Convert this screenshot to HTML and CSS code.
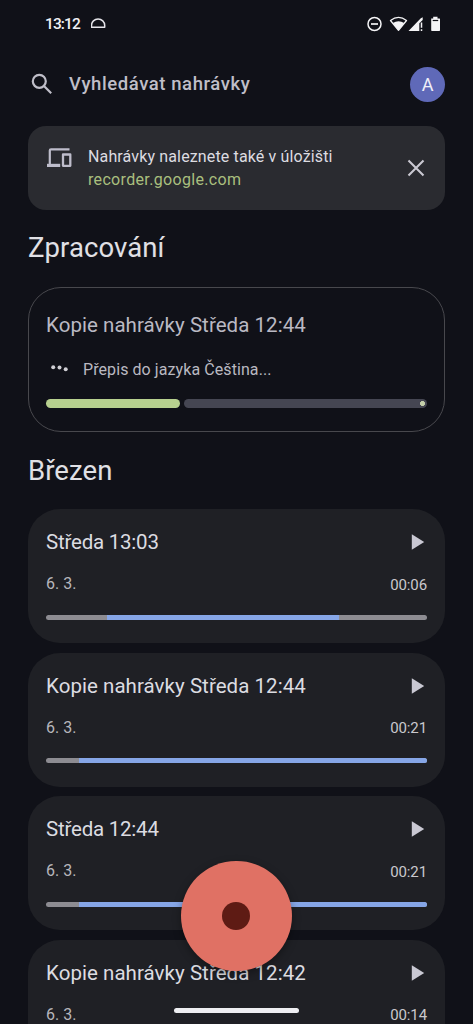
FILE: index.html
```html
<!DOCTYPE html>
<html lang="cs">
<head>
<meta charset="utf-8">
<title>Nahrávky</title>
<link rel="stylesheet" href="styles.css">
</head>
<body>
<div class="screen">
  <header class="status">
    <span class="clock">13:12</span>
    <svg class="dome" width="16" height="12" viewBox="0 0 16 12" fill="none" stroke="#e6e5ea" stroke-width="1.500" stroke-linejoin="round"><path d="M.5 9.300V7.500a6.600 6.500 0 0 1 13.200 0v1.800Z"/></svg>
    <svg class="system" width="75" height="18" viewBox="0 0 75 18">
      <circle cx="8.500" cy="9" r="6.500" fill="none" stroke="#f4f4f6" stroke-width="1.500"/>
      <path d="M5 9h7" stroke="#f4f4f6" stroke-width="1.700"/>
      <path d="M24.500 5.500Q32.500-.7 40.500 5.500L32.500 15.300Z" fill="none" stroke="#f4f4f6" stroke-width="1.300" stroke-linejoin="round"/>
      <path d="M26.800 8Q32.500 4.500 38.200 8L32.500 15.500Z" fill="#f4f4f6"/>
      <path d="M42.500 16 54.800 3.200 56.700 2.300V5L53.300 8.300V16Z" fill="#f4f4f6"/>
      <path d="M55.500 7.500v5.200M55.500 14.200v1.800" stroke="#f4f4f6" stroke-width="1.500"/>
      <path d="M65.200 3.500h2v-1.800h4.300v1.800h2q.5 0 .5.500v11.300q0 .7-.7.700h-7.400q-.7 0-.7-.7Z" fill="#f4f4f6"/>
      <path d="M66.700 5.500h5.500" stroke="#101118" stroke-width="1.200"/>
    </svg>
  </header>

  <div class="search">
    <svg class="lens" width="22" height="22" viewBox="0 0 22 22" fill="none" stroke="#bfbec8" stroke-width="2.200"><circle cx="8.300" cy="8.300" r="6.500"/><path d="m13 13 7.200 7.200"/></svg>
    <span class="placeholder">Vyhledávat nahrávky</span>
    <span class="avatar">A</span>
  </div>

  <section class="banner">
    <svg class="devices" width="26" height="20" viewBox="0 0 26 20"><path d="M23.500 1.300H5Q3.800 1.300 3.800 2.500V16.500" fill="none" stroke="#bebdcb" stroke-width="2.200"/><path d="M1 15.800h13.200V19H1Z" fill="#bebdcb"/><rect x="17" y="6.500" width="7.300" height="11.300" fill="none" stroke="#bebdcb" stroke-width="2.300" stroke-linejoin="round"/></svg>
    <div class="notice"><p class="notice-text">Nahrávky naleznete také v úložišti</p><p class="notice-link">recorder.google.com</p></div>
    <svg class="close" width="18" height="18" viewBox="0 0 18 18" stroke="#cac9d2" stroke-width="2.100"><path d="m1.500 1.500 15 15m0-15-15 15"/></svg>
  </section>

  <h1 class="heading processing-heading">Zpracování</h1>
  <section class="processing">
    <h2 class="title pending">Kopie nahrávky Středa 12:44</h2>
    <div class="task">
      <svg width="18" height="8" viewBox="0 0 18 8" fill="#d0cfd4"><circle cx="2.200" cy="2.300" r="2"/><circle cx="8.500" cy="2.600" r="2"/><circle cx="14.700" cy="4.200" r="2"/></svg>
      <span class="task-text">Přepis do jazyka Čeština...</span>
    </div>
    <div class="progress"><span class="done"></span><span class="rest"></span></div>
  </section>

  <h1 class="heading month">Březen</h1>
  <main class="list">
    <article class="card">
      <div class="row"><h2 class="title short">Středa 13:03</h2><svg class="play" width="14" height="16" viewBox="0 0 14 16"><path d="M.8.200 13.200 8 .8 15.800Z" fill="#c9c8d3"/></svg></div>
      <div class="meta"><span class="date">6. 3.</span><span class="time">00:06</span></div>
      <div class="wave"><span class="speech" style="margin-left:61px;width:232px"></span></div>
    </article>
    <article class="card">
      <div class="row"><h2 class="title">Kopie nahrávky Středa 12:44</h2><svg class="play" width="14" height="16" viewBox="0 0 14 16"><path d="M.8.200 13.200 8 .8 15.800Z" fill="#c9c8d3"/></svg></div>
      <div class="meta"><span class="date">6. 3.</span><span class="time">00:21</span></div>
      <div class="wave"><span class="speech" style="margin-left:33px;width:348px"></span></div>
    </article>
    <article class="card">
      <div class="row"><h2 class="title short">Středa 12:44</h2><svg class="play" width="14" height="16" viewBox="0 0 14 16"><path d="M.8.200 13.200 8 .8 15.800Z" fill="#c9c8d3"/></svg></div>
      <div class="meta"><span class="date">6. 3.</span><span class="time">00:21</span></div>
      <div class="wave"><span class="speech" style="margin-left:33px;width:348px"></span></div>
    </article>
    <article class="card">
      <div class="row"><h2 class="title">Kopie nahrávky Středa 12:42</h2><svg class="play" width="14" height="16" viewBox="0 0 14 16"><path d="M.8.200 13.200 8 .8 15.800Z" fill="#c9c8d3"/></svg></div>
      <div class="meta"><span class="date">6. 3.</span><span class="time">00:14</span></div>
      <div class="wave"></div>
    </article>
  </main>
  <button class="record" aria-label="Nahrávat"><span class="dot"></span></button>
  <div class="home-bar"></div>
</div>
</body>
</html>
```
FILE: styles.css
```css
* { box-sizing: border-box; margin: 0; padding: 0; }
body { background: #101118; font-family: Roboto, "Open Sans", sans-serif; color: #dedde2; }
.screen { position: relative; width: 473px; height: 1024px; overflow: hidden; padding: 0 28px; background: #101118; }

.status { display: flex; height: 48px; padding: 15px 4px 0 17px; }
.clock { width: 46px; font: 500 15.500px/18px Roboto, sans-serif; letter-spacing: -0.9px; color: #f1f1f4; white-space: nowrap; }
.dome { margin-top: 3px; }
.system { margin-left: auto; }

.search { display: flex; align-items: center; height: 72px; }
.lens { margin-left: 3px; }
.placeholder { margin-left: 16px; font-size: 18.500px; font-weight: 500; letter-spacing: 0.580px; color: #bfbec8; white-space: nowrap; }
.avatar { width: 35px; height: 35px; margin-left: auto; border-radius: 50%; background: #5f69b8; color: #f0f0f8; font-size: 18px; font-weight: 400; line-height: 36px; text-align: center; }

.banner { display: flex; height: 84px; margin-top: 5.5px; padding: 18px 20px 0 18px; border-radius: 18px; background: #2a2b30; }
.devices { margin-top: 4px; }
.notice { margin: 1px 0 0 16px; font-size: 16px; line-height: 23.5px; white-space: nowrap; }
.notice-text { letter-spacing: 0.14px; color: #dddce1; }
.notice-link { letter-spacing: 0.33px; color: #a9bf7e; }
.close { margin: 15.500px 0 0 auto; }

.heading { font-size: 27.500px; font-weight: 400; line-height: 36px; letter-spacing: 0.080px; color: #e0e0e5; }
.processing-heading { margin-top: 20px; }
.processing { height: 145px; margin-top: 21.500px; padding: 23px 17px 0; border: 1px solid #48484d; border-radius: 33px; }
.title { font-size: 20.500px; font-weight: 400; line-height: 28px; letter-spacing: 0.050px; color: #dcdce1; white-space: nowrap; }
.short { letter-spacing: -0.220px; }
.pending { color: #bab9c3; }
.task { display: flex; align-items: center; height: 24px; margin-top: 18px; padding-left: 5px; }
.task-text { margin-left: 14px; font-size: 16px; letter-spacing: 0.080px; color: #bab9c1; white-space: nowrap; }
.progress { display: flex; gap: 4.500px; margin-top: 18px; height: 9px; }
.done { width: 133.500px; border-radius: 5px; background: #b7d08f; }
.rest { flex: 1; border-radius: 5px; background: radial-gradient(circle at calc(100% - 4.500px) 50%, #c4cfaa 2.200px, transparent 2.800px), #454652; }

.month { margin-top: 20.500px; }
.list { display: flex; flex-direction: column; gap: 9.600px; margin-top: 20.500px; }
.card { flex: none; height: 134px; padding: 19px 18px 0; border-radius: 32px; background: #1f2025; }
.row { display: flex; justify-content: space-between; align-items: center; height: 28px; }
.play { margin-right: 2px; }
.meta { display: flex; justify-content: space-between; height: 24px; margin-top: 15px; font-size: 16px; line-height: 24px; color: #b7b6bc; }
.date { margin-top: 1px; }
.time { margin-top: 1.500px; font-size: 15px; color: #c9c8cd; letter-spacing: -0.1px; }
.wave { display: flex; height: 5px; margin-top: 19.500px; border-radius: 2.500px; overflow: hidden; background: #8d8c92; }
.speech { background: #86a6e7; }

.record { position: absolute; left: 181px; top: 860.500px; display: flex; align-items: center; justify-content: center; width: 110.500px; height: 110px; border: 0; border-radius: 50%; background: #e07164; box-shadow: 0 3px 8px rgba(0, 0, 0, 0.35); }
.dot { width: 28px; height: 28px; border-radius: 50%; background: #5e1b14; }
.home-bar { position: absolute; left: 174px; top: 1008px; width: 125px; height: 5px; border-radius: 3px; background: #eeeef2; }
```
